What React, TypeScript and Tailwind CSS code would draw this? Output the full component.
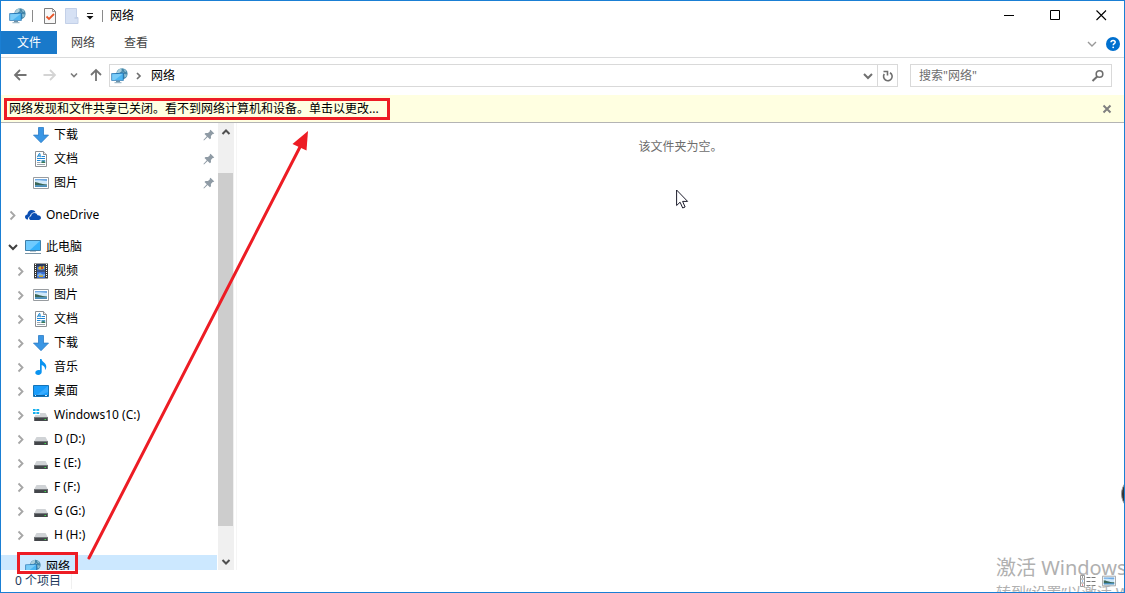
import React from 'react';

type IconProps = { className?: string };

function NetworkIcon({ className = 'h-4 w-[17px]' }: IconProps) {
  return (
    <svg viewBox="0 0 17 16" className={className} aria-hidden="true">
      <circle cx="11" cy="5.8" r="5.6" fill="#4486a8" />
      <path d="M5.6 5C6.600 2 9 .3 11 .3c-1 1.300-.2 2-.2 2.800-.9 1.200-2 1.400-2.800 2.600z" fill="#a9cfdd" />
      <path d="M12.500.8l2.200 1.400.8 2-2-.6zM13 6l3 .6-1 2.500-1.500.3zM11.200 3.400l1.600.6-.6 1z" fill="#8fc0d4" />
      <path d="M.3 5.300l12.400-.6v8.100H.3z" fill="#2577b5" />
      <path d="M1.200 6.200l10.600-.5V12H1.200z" fill="#4cb6f2" />
      <path d="M1.200 6.200l10.600-.5-8 6.300H1.200z" fill="#7accf8" />
      <path d="M5 12.800h4v1.400H5z" fill="#6f93aa" />
      <path d="M3.500 14.200h7v1h-7z" fill="#8aa9bb" />
    </svg>
  );
}

function DownloadIcon() {
  return (
    <svg viewBox="0 0 16 16" className="size-4" aria-hidden="true">
      <path d="M5.5.5h5v7.600h5L8 15.700.5 8.100h5z" fill="#3a96e4" stroke="#2c7cc6" strokeWidth=".8" />
    </svg>
  );
}

function DocumentIcon() {
  return (
    <svg viewBox="0 0 16 16" className="size-4" aria-hidden="true">
      <path d="M2.5.5h8l3 3v12h-11z" fill="#fff" stroke="#8b8f93" />
      <path d="M10.5.5v3h3" fill="#e4e6e8" stroke="#8b8f93" />
      <path d="M4.300 6.200l2-3.700h.6l.4 3.700M5 5h2.200" fill="none" stroke="#1683cf" />
      <path d="M8.500 5.500H12M4 7.500h8M4 9.500h3.500" stroke="#1f86d6" />
      <path d="M4 11.500h3.500M4 13.500h8" stroke="#9aa5ad" />
      <path d="M8.500 9h3.700v3H8.500z" fill="#4d9ac4" />
      <path d="M8.500 11l1.800-.8 1.900 1v.8H8.500z" fill="#3b7a52" />
    </svg>
  );
}

function PictureIcon({ className = 'size-4' }: IconProps) {
  return (
    <svg viewBox="0 0 16 16" className={className} aria-hidden="true">
      <path d="M.5 2.500h15v11H.5z" fill="#fff" stroke="#989ca0" />
      <path d="M2 4h12v8H2z" fill="#cfe8fa" />
      <path d="M2 4h12v2C9 6 6 5 2 5.500z" fill="#6ea9e4" />
      <path d="M2 7c3 .2 5 2 12 2.500v1H2z" fill="#3a6656" />
      <path d="M2 10.200h12V12H2z" fill="#4b8fbb" />
    </svg>
  );
}

function OneDriveIcon() {
  return (
    <svg viewBox="0 0 16 16" className="size-4" aria-hidden="true">
      <path d="M2.500 12.500C.8 12.300 0 11.200 0 10c0-1.400 1-2.500 2.300-2.600C2.600 4.900 4.300 3 6.700 3c1.800 0 3.100.9 3.900 2.200-3.200-.3-5.300 1.600-5.600 4C3.500 9.700 2.800 11 3 12.500z" fill="#0b4fb3" />
      <path d="M6.300 13C5 13 4.100 12.300 4.100 11.200c0-1.200.9-1.900 2-2C6.200 7.200 7.600 6 9.300 6c1.500 0 2.700.8 3.200 2.300 1.900-.2 3.500.9 3.500 2.500 0 1.300-1 2.200-2.300 2.200z" fill="#0b4fb3" />
    </svg>
  );
}

function ComputerIcon() {
  return (
    <svg viewBox="0 0 16 16" className="size-4" aria-hidden="true">
      <path d="M.5 1.500h15v10H.5z" fill="#35b1fb" stroke="#3f7fa8" />
      <path d="M1 2h14L5 11H1z" fill="#6fcbff" />
      <path d="M5 12h6v1H5z" fill="#b8c8d2" />
      <path d="M0 14h16v1H0z" fill="#7894a6" />
    </svg>
  );
}

function VideoIcon() {
  return (
    <svg viewBox="0 0 16 16" className="size-4" aria-hidden="true">
      <path d="M1 .5h14v15H1z" fill="#3a3a3a" />
      <path d="M4 1h8v6.500H4zM4 8.500h8V15H4z" fill="#3b6fd0" />
      <path d="M4 1h8v2.500H4z" fill="#27395f" />
      <path d="M5 5l2-2 2 1 2-1.500.5 3L9 6.500H6z" fill="#d7b42a" />
      <path d="M8 4h2v2H8z" fill="#c2452e" />
      <path d="M5 11l2-1 3 1.500 2-.5v2L8 14l-4-1z" fill="#7db2ea" />
      <path d="M6 12.500h4V14H6z" fill="#c9a62b" />
      <path d="M2.500 1v14M13.500 1v14" stroke="#fff" strokeDasharray="1 1" />
    </svg>
  );
}

function MusicIcon() {
  return (
    <svg viewBox="0 0 16 16" className="size-4" aria-hidden="true">
      <path d="M7 0h1.500c.3 3 4.800 3.800 4.800 7.700 0 1.300-.6 2.500-1.300 3.300.3-2.800-1-4.300-3.300-4.900V13c0 1.700-1.500 2.900-3.500 2.900-1.700 0-2.900-.8-2.900-2.100 0-1.600 1.600-2.700 3.400-2.700.5 0 .9.100 1.300.2z" fill="#0a93f0" />
    </svg>
  );
}

function DesktopIcon() {
  return (
    <svg viewBox="0 0 16 16" className="size-4" aria-hidden="true">
      <path d="M.5 2.500h15v11H.5z" fill="#1a9dfb" stroke="#1474b8" />
      <path d="M15 3v6L8 12H4z" fill="#37abff" />
      <path d="M1 12.500h14" stroke="#0d5f9e" />
      <path d="M2 12.500h1M12 12.500h2" stroke="#d3ecff" />
    </svg>
  );
}

function DriveIcon({ system = false }: { system?: boolean }) {
  return (
    <svg viewBox="0 0 16 16" className="size-4" aria-hidden="true">
      <path d="M3.500 6h9l2.200 4H1.300z" fill="#d0d3d6" />
      <path d="M1.200 10h13.600v4H1.200z" fill="#43464a" />
      <path d="M1.200 10h13.600v1H1.200z" fill="#74787c" />
      <path d="M11.500 12h1.500v1h-1.500z" fill="#3fe04b" />
      {system && (
        <>
          <path d="M0 1h7v7H0z" fill="#fff" />
          <path d="M0 2h2.600v2H0zM3.400 2h2.800v2H3.400zM0 5h2.600v2H0zM3.400 5h2.800v2H3.400z" fill="#16b0ee" />
        </>
      )}
    </svg>
  );
}

function Pin() {
  return (
    <svg viewBox="0 0 12 12" className="size-3" aria-hidden="true">
      <path d="M7.500.8l3.800 3.700-1.100.6-.5-.1-1.800 1.900.1 2.300-1.100 1L4.600 8 1 11.500l-.6-.4L3.800 7.200 1.500 5l1-1 2.500.1L6.900 2.300 6.800 1.500z" fill="#8f9ba5" />
    </svg>
  );
}

function Chevron({ d, className, width = 2 }: { d: string; className: string; width?: number }) {
  return (
    <svg viewBox="0 0 16 16" className={`size-4 ${className}`} fill="none" stroke="currentColor" strokeWidth={width} aria-hidden="true">
      <path d={d} />
    </svg>
  );
}

const RIGHT = 'M5.500 4.500l4 4-4 4';
const DOWN = 'M4 6l4 4 4-4';
const UP = 'M4.500 10L8 6.500l3.500 3.500';

type Node = { label: string; icon: React.ReactNode; child?: boolean; open?: boolean; pinned?: boolean; active?: boolean };

const groups: Node[][] = [
  [
    { label: '下载', icon: <DownloadIcon />, child: true, pinned: true },
    { label: '文档', icon: <DocumentIcon />, child: true, pinned: true },
    { label: '图片', icon: <PictureIcon />, child: true, pinned: true },
  ],
  [{ label: 'OneDrive', icon: <OneDriveIcon /> }],
  [
    { label: '此电脑', icon: <ComputerIcon />, open: true },
    { label: '视频', icon: <VideoIcon />, child: true },
    { label: '图片', icon: <PictureIcon />, child: true },
    { label: '文档', icon: <DocumentIcon />, child: true },
    { label: '下载', icon: <DownloadIcon />, child: true },
    { label: '音乐', icon: <MusicIcon />, child: true },
    { label: '桌面', icon: <DesktopIcon />, child: true },
    { label: 'Windows10 (C:)', icon: <DriveIcon system />, child: true },
    { label: 'D (D:)', icon: <DriveIcon />, child: true },
    { label: 'E (E:)', icon: <DriveIcon />, child: true },
    { label: 'F (F:)', icon: <DriveIcon />, child: true },
    { label: 'G (G:)', icon: <DriveIcon />, child: true },
    { label: 'H (H:)', icon: <DriveIcon />, child: true },
  ],
  [{ label: '网络', icon: <NetworkIcon className="size-4" />, active: true }],
];

function TreeRow({ node }: { node: Node }) {
  const expandable = !node.pinned && !node.active;
  return (
    <li className={`flex h-6 items-center gap-1 pr-0.5 ${node.child ? 'pl-3' : 'pl-1'} ${node.active ? 'bg-[#cce8ff]' : ''}`}>
      {expandable ? (
        <button type="button" aria-label={`展开 ${node.label}`} className="size-4">
          {node.open ? <Chevron d={DOWN} className="text-[#404040]" /> : <Chevron d={RIGHT} width={1.800} className="text-[#a6a6a6]" />}
        </button>
      ) : (
        <span className="size-4" />
      )}
      <a href="#" className="flex flex-1 items-center gap-[5px] whitespace-nowrap">
        {node.icon}
        <span>{node.label}</span>
      </a>
      {node.pinned && <Pin />}
    </li>
  );
}

function TitleBar() {
  return (
    <header className="flex h-[30px] shrink-0 items-center pb-px pl-2">
      <NetworkIcon />
      <span className="ml-1.5 h-3 w-px bg-[#8a8a8a]" />
      <button type="button" aria-label="属性" className="ml-2.5">
        <svg viewBox="0 0 14 16" className="h-4 w-3.5" aria-hidden="true">
          <path d="M1.500.5h8l3 3v12h-11z" fill="#f8f8f8" stroke="#7d7d7d" />
          <path d="M9.500.5v3h3" fill="none" stroke="#9a9a9a" />
          <path d="M3.500 8.500l2.500 2.500 5-5" fill="none" stroke="#e8562a" strokeWidth="1.800" />
        </svg>
      </button>
      <button type="button" aria-label="新建文件夹" className="ml-2">
        <svg viewBox="0 0 14 16" className="h-4 w-3.5" aria-hidden="true">
          <path d="M.5.5h11v9h1.500v6H.5z" fill="#d6e1f4" stroke="#c3d0e8" />
          <path d="M9.500 10h3" stroke="#b5c4de" />
        </svg>
      </button>
      <button type="button" aria-label="自定义快速访问工具栏" className="ml-[7px]">
        <svg viewBox="0 0 8 8" className="size-2" aria-hidden="true">
          <path d="M1 1.500h6" stroke="#222" />
          <path d="M.5 4h7L4 7.500z" fill="#111" />
        </svg>
      </button>
      <span className="ml-2 h-3 w-px bg-[#8a8a8a]" />
      <h1 className="ml-[7px] flex-1">网络</h1>
      <div className="flex">
        <button type="button" aria-label="最小化" className="flex h-7 w-[46px] items-center justify-center">
          <svg viewBox="0 0 11 11" className="size-[11px]" aria-hidden="true"><path d="M0 5.500h10" stroke="#000" /></svg>
        </button>
        <button type="button" aria-label="最大化" className="flex h-7 w-[46px] items-center justify-center">
          <svg viewBox="0 0 11 11" className="size-[11px]" aria-hidden="true"><path d="M.5.5h9v9h-9z" fill="none" stroke="#000" /></svg>
        </button>
        <button type="button" aria-label="关闭" className="flex h-7 w-[46px] items-center justify-center">
          <svg viewBox="0 0 11 11" className="size-[11px]" aria-hidden="true"><path d="M.5.5l9.500 9.500M10 .5L.5 10" stroke="#000" strokeWidth="1.100" /></svg>
        </button>
      </div>
    </header>
  );
}

function Ribbon() {
  return (
    <nav className="flex h-[27px] shrink-0 items-start border-b border-[#dadbdc] text-[#444]">
      <button type="button" className="h-[23px] bg-[#1979ca] px-4 text-white">文件</button>
      <button type="button" className="h-6 px-3.5">网络</button>
      <button type="button" className="h-6 px-[15px]">查看</button>
      <div className="ml-auto flex h-[26px] items-center gap-1.5 pr-1">
        <button type="button" aria-label="展开功能区"><Chevron d={DOWN} width={1.400} className="text-[#999]" /></button>
        <button type="button" aria-label="帮助">
          <svg viewBox="0 0 14 14" className="size-3.5" aria-hidden="true">
            <circle cx="7" cy="7" r="7" fill="#0070cf" />
            <path d="M5 5.300c0-2.600 4.200-2.500 4.200-.1C9.200 6.700 7.200 6.700 7.200 8.300" fill="none" stroke="#fff" strokeWidth="1.500" />
            <circle cx="7.200" cy="10.300" r=".9" fill="#fff" />
          </svg>
        </button>
      </div>
    </nav>
  );
}

function AddressRow() {
  return (
    <div className="flex h-[37px] shrink-0 items-start px-3 pt-1.5">
      <div className="flex h-[22px] items-center">
        <button type="button" aria-label="后退">
          <svg viewBox="0 0 14 14" className="size-3.5" fill="none" stroke="#737373" strokeWidth="1.800" aria-hidden="true"><path d="M13.500 7H2M7 2L2 7l5 5" /></svg>
        </button>
        <button type="button" aria-label="前进" className="ml-4">
          <svg viewBox="0 0 14 14" className="size-3.5" fill="none" stroke="#d4d4d4" strokeWidth="1.800" aria-hidden="true"><path d="M.5 7H12M7 2l5 5-5 5" /></svg>
        </button>
        <button type="button" aria-label="最近位置" className="ml-3">
          <svg viewBox="0 0 10 10" className="size-2.5" fill="none" stroke="#7c7c7c" strokeWidth="1.600" aria-hidden="true"><path d="M2 3.500l3 3 3-3" /></svg>
        </button>
        <button type="button" aria-label="上移" className="ml-2.5">
          <svg viewBox="0 0 14 14" className="size-3.5" fill="none" stroke="#737373" strokeWidth="1.800" aria-hidden="true"><path d="M7 13V2M2 7l5-5 5 5" /></svg>
        </button>
      </div>
      <div className="ml-1.5 flex h-[23px] flex-1 items-center border border-[#d9d9d9]">
        <NetworkIcon className="ml-px h-4 w-[17px]" />
        <svg viewBox="0 0 10 10" className="ml-1.5 size-2.5" fill="none" stroke="#6f6f6f" strokeWidth="1.700" aria-hidden="true"><path d="M3 2l3 3-3 3" /></svg>
        <button type="button" className="ml-[7px] flex-1 text-left">网络</button>
        <button type="button" aria-label="历史记录" className="flex h-full w-[18px] items-center justify-center">
          <Chevron d={DOWN} className="text-[#707070]" />
        </button>
        <button type="button" aria-label="刷新" className="flex h-full w-5 items-center justify-center border-l border-[#d9d9d9]">
          <svg viewBox="0 0 12 12" className="size-3" fill="none" stroke="#6e6e6e" strokeWidth="1.600" aria-hidden="true">
            <path d="M2.300 4A4.300 4.300 0 1 0 8 2.700" />
            <path d="M1.500 1.500h4v4" />
          </svg>
        </button>
      </div>
      <label className="ml-3 flex h-[23px] w-[202px] items-center border border-[#d9d9d9] pr-1.5 pl-2">
        <input type="text" aria-label="搜索" placeholder={'搜索"网络"'} className="min-w-0 flex-1 outline-none placeholder:text-[#6d6d6d]" />
        <svg viewBox="0 0 14 14" className="size-3.5" fill="none" stroke="#6e6e6e" aria-hidden="true">
          <circle cx="8.500" cy="5" r="3.300" strokeWidth="1.600" />
          <path d="M6.200 7.500L1.500 12" strokeWidth="2" />
        </svg>
      </label>
    </div>
  );
}

function Scrollbar() {
  return (
    <div className="flex w-4 flex-col bg-[#f0f0f0]" aria-hidden="true">
      <Chevron d={UP} className="mt-px text-[#505050]" />
      <div className="flex flex-1 flex-col pt-[33px] pb-7">
        <div className="w-[15px] flex-1 bg-[#cdcdcd]" />
      </div>
      <Chevron d="M4.500 6L8 9.500 11.500 6" className="text-[#505050]" />
    </div>
  );
}

function Annotations() {
  return (
    <div className="pointer-events-none absolute inset-0" aria-hidden="true">
      <div className="absolute top-[97px] left-[3px] h-[22px] w-[386px] border-3 border-[#ed1c24]" />
      <div className="absolute top-[551px] left-4 h-[22px] w-[61px] border-3 border-[#ed1c24]" />
      <svg className="absolute top-[129px] left-[83px] h-[434px] w-[230px]" viewBox="84 130 230 434">
        <path d="M89 558L301 145" stroke="#ed1c24" strokeWidth="3" strokeLinecap="round" />
        <path d="M308 131l-15.500 13 14 6.500z" fill="#ed1c24" />
      </svg>
      <svg className="absolute top-[188px] left-[675px] h-5 w-[13px]" viewBox="0 0 13 20">
        <path d="M.6 1v15.500l3.500-3.300L6.700 19l2.400-1-2.500-5.600h5z" fill="#fff" stroke="#1c1c2c" />
      </svg>
      <div className="absolute right-0 bottom-0 h-10 w-32 overflow-hidden whitespace-nowrap text-[#b0b0b0]">
        <p className="text-[20px] leading-8">激活 Windows</p>
        <p className="text-[15px] leading-4">转到“设置”以激活 Windows。</p>
      </div>
      <div className="absolute right-0 bottom-[80px] h-9 w-[3px] overflow-hidden">
        <div className="size-9 rounded-full border border-[#999] bg-[#333]" />
      </div>
    </div>
  );
}

export default function App() {
  return (
    <div className="relative flex h-screen flex-col overflow-hidden border border-[#1a7fd4] bg-white font-['Noto_Sans','Noto_Sans_CJK_SC',sans-serif] text-[12px] leading-4 text-black">
      <TitleBar />
      <Ribbon />
      <AddressRow />
      <div className="flex h-7 shrink-0 items-center justify-between border-b border-[#b4b4b4] bg-[#ffffe1] pr-3 pl-2">
        <button type="button" className="whitespace-nowrap">网络发现和文件共享已关闭。看不到网络计算机和设备。单击以更改...</button>
        <button type="button" aria-label="关闭通知">
          <svg viewBox="0 0 10 10" className="size-2.5" aria-hidden="true"><path d="M1.500 1.500l7 7M8.500 1.500l-7 7" stroke="#808080" strokeWidth="2" /></svg>
        </button>
      </div>
      <main className="flex min-h-0 flex-1">
        <aside className="flex w-[236px] shrink-0 overflow-hidden border-r border-[#f5f5f5]">
          <nav className="mr-px flex w-[216px] flex-col gap-2 overflow-hidden" aria-label="导航窗格">
            {groups.map((group, i) => (
              <ul key={i} className="shrink-0">
                {group.map((node) => <TreeRow key={node.label} node={node} />)}
              </ul>
            ))}
          </nav>
          <Scrollbar />
        </aside>
        <section className="flex-1 pt-4 text-center text-[#6d6d6d]">该文件夹为空。</section>
      </main>
      <footer className="flex h-[22px] shrink-0 items-center justify-between pr-2 pl-3.5 text-[#1e395b]">
        <span className="border-r border-[#f0f0f0] pr-2.5">0 个项目</span>
        <div className="flex items-center gap-1.5">
          <button type="button" aria-label="详细信息">
            <svg viewBox="0 0 16 14" className="h-3.5 w-4" aria-hidden="true">
              <path d="M.5 1.500h4v11h-4zM.5 5h4M.5 9h4" fill="#fff" stroke="#999" />
              <path d="M2 3h1" stroke="#333" /><path d="M2 7h1" stroke="#2a7bd0" /><path d="M2 11h1" stroke="#d02020" />
              <path d="M6.500 3.500h9M6.500 7.500h9M6.500 11.500h9" stroke="#777" strokeDasharray="4 1" />
            </svg>
          </button>
          <button type="button" aria-label="大图标"><PictureIcon className="size-3.5" /></button>
        </div>
      </footer>
      <Annotations />
    </div>
  );
}
